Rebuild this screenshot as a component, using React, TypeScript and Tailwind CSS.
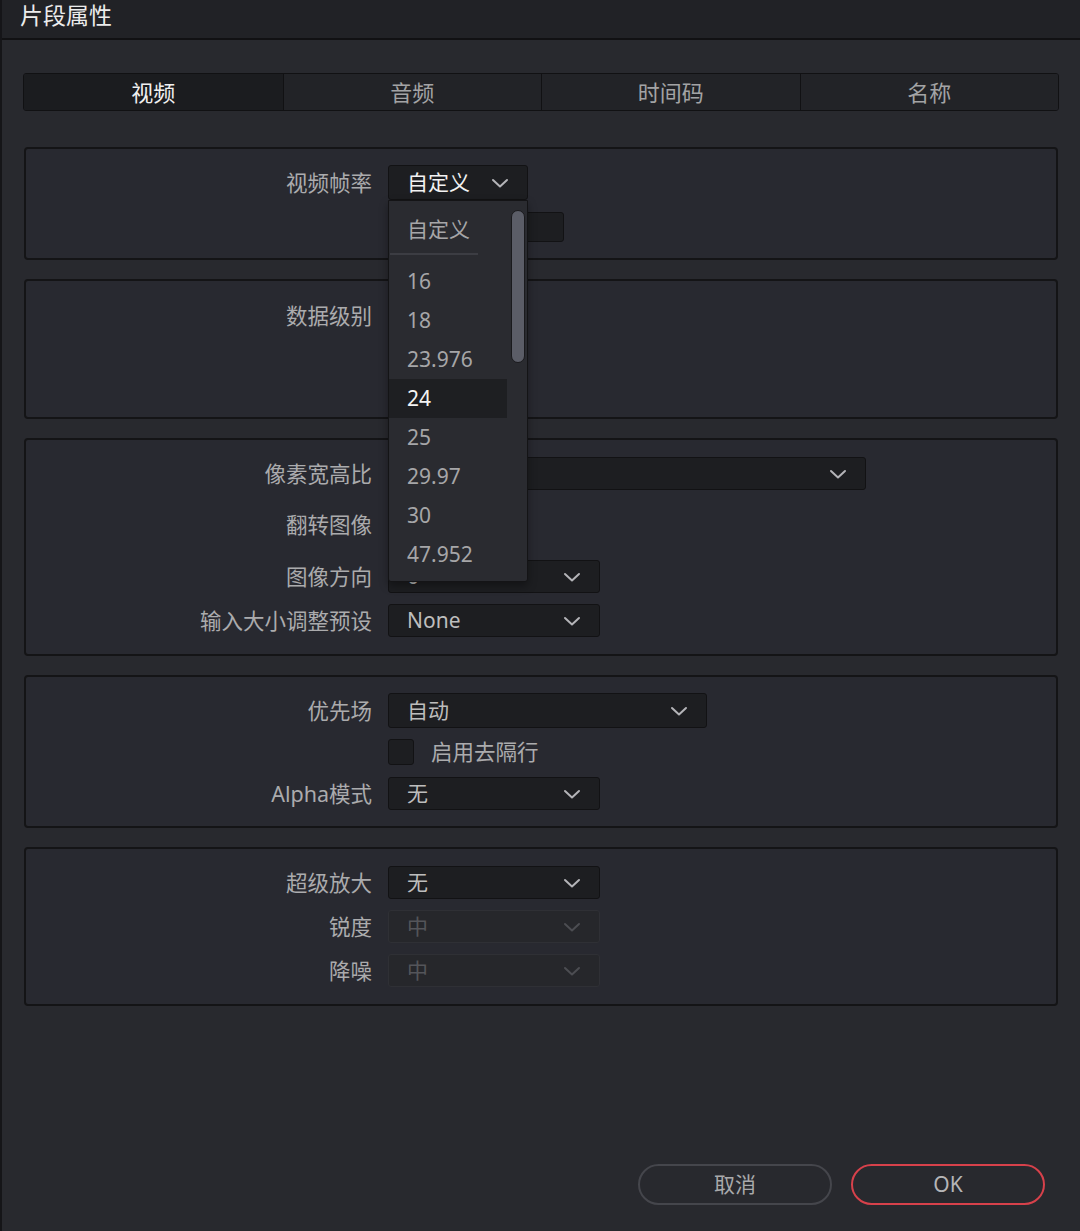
import { ReactNode } from "react";

const font = { fontFamily: '"Noto Sans", "Noto Sans CJK SC", sans-serif' };

const Chevron = ({ disabled = false }: { disabled?: boolean }) => (
  <svg width="18" height="10" viewBox="0 0 18 10" className="shrink-0">
    <path
      d="M2 2 L9 8.5 L16 2"
      fill="none"
      stroke={disabled ? "#4c4d52" : "#b4b4b8"}
      strokeWidth="2"
      strokeLinecap="round"
      strokeLinejoin="round"
    />
  </svg>
);

interface SelectProps {
  value?: string;
  width: string;
  height?: string;
  bright?: boolean;
  disabled?: boolean;
}

const Select = ({ value = "", width, height = "h-[34px]", bright, disabled }: SelectProps) => (
  <div
    className={`${width} ${height} flex items-center justify-between rounded-[3px] border pl-[18px] pr-[18px] text-[21px] ${
      disabled
        ? "border-[#2f3035] bg-[#26272b] text-[#54555a]"
        : `border-[#121214] bg-[#1d1e21] ${bright ? "text-[#f2f2f2]" : "text-[#bdbdbd]"}`
    }`}
  >
    <span className="leading-none">{value}</span>
    <Chevron disabled={disabled} />
  </div>
);

const Row = ({ label, children, className = "" }: { label?: string; children?: ReactNode; className?: string }) => (
  <div className={`flex items-center ${className}`}>
    <div className="w-[346px] shrink-0 text-right text-[21.5px] leading-none text-[#ababad]">{label}</div>
    <div className="ml-[16px] flex items-center">{children}</div>
  </div>
);

const Panel = ({ children, className = "" }: { children: ReactNode; className?: string }) => (
  <div className={`flex flex-col rounded-[4px] border-2 border-[#141416] bg-[#282930] ${className}`}>{children}</div>
);

const tabs = ["视频", "音频", "时间码", "名称"];
const rates = ["16", "18", "23.976", "24", "25", "29.97", "30", "47.952"];

export default function App() {
  return (
    <div
      style={font}
      className="relative flex h-[1231px] w-[1080px] flex-col overflow-hidden border-l-2 border-[#151518] bg-[#28292e]"
    >
      {/* Title bar */}
      <div className="flex h-[40px] shrink-0 items-center border-b-2 border-[#111113] bg-[#212226] pl-[18px] pb-[8px] text-[23px] text-[#ececec]">
        片段属性
      </div>

      <div className="flex flex-1 flex-col px-[21px] pt-[33px]">
        {/* Tabs */}
        <div className="grid h-[38px] grid-cols-4 overflow-hidden rounded-[3px] border border-[#111113]">
          {tabs.map((t, i) => (
            <div
              key={t}
              className={`flex items-center justify-center text-[22px] ${
                i > 0 ? "border-l border-[#111113]" : ""
              } ${i === 0 ? "bg-[#1b1c1f] text-[#f0f0f0]" : "bg-[#222327] text-[#a3a3a5]"}`}
            >
              {t}
            </div>
          ))}
        </div>

        <div className="mt-[36px] flex flex-col gap-[19px] pl-[1px] pr-[1px]">
          {/* Frame rate */}
          <Panel className="h-[113px] pt-[16px]">
            <Row label="视频帧率">
              <Select value="自定义" width="w-[140px]" height="h-[35px]" bright />
            </Row>
            <Row className="mt-[12px]">
              <div className="h-[30px] w-[176px] rounded-[3px] border border-[#121214] bg-[#1d1e21]" />
            </Row>
          </Panel>

          {/* Data levels */}
          <Panel className="h-[140px] pt-[24px]">
            <Row label="数据级别" className="h-[22px]" />
          </Panel>

          {/* Image */}
          <Panel className="h-[218px] pt-[17px]">
            <Row label="像素宽高比">
              <Select width="w-[478px]" height="h-[33px]" />
            </Row>
            <Row label="翻转图像" className="mt-[20px] h-[30px]" />
            <Row label="图像方向" className="mt-[20px]">
              <Select value="0°" width="w-[212px]" height="h-[33px]" />
            </Row>
            <Row label="输入大小调整预设" className="mt-[11px]">
              <Select value="None" width="w-[212px]" height="h-[33px]" />
            </Row>
          </Panel>

          {/* Field / alpha */}
          <Panel className="h-[153px] pt-[16px]">
            <Row label="优先场">
              <Select value="自动" width="w-[319px]" height="h-[35px]" />
            </Row>
            <Row className="mt-[11px]">
              <div className="h-[26px] w-[26px] rounded-[3px] border border-[#121214] bg-[#1d1e21]" />
              <span className="ml-[17px] text-[21.5px] leading-none text-[#ababad]">启用去隔行</span>
            </Row>
            <Row label="Alpha模式" className="mt-[12px]">
              <Select value="无" width="w-[212px]" height="h-[33px]" />
            </Row>
          </Panel>

          {/* Super scale */}
          <Panel className="h-[159px] pt-[17px]">
            <Row label="超级放大">
              <Select value="无" width="w-[212px]" height="h-[33px]" />
            </Row>
            <Row label="锐度" className="mt-[11px]">
              <Select value="中" width="w-[212px]" height="h-[33px]" disabled />
            </Row>
            <Row label="降噪" className="mt-[11px]">
              <Select value="中" width="w-[212px]" height="h-[33px]" disabled />
            </Row>
          </Panel>
        </div>

        {/* Buttons */}
        <div className="mt-auto mb-[26px] flex justify-end gap-[19px] pr-[14px]">
          <button className="h-[41px] w-[194px] rounded-full border-2 border-[#45464c] text-[21px] text-[#a9a9ab]">
            取消
          </button>
          <button className="h-[41px] w-[194px] rounded-full border-2 border-[#d7414b] text-[21px] text-[#b5b5b7]">
            OK
          </button>
        </div>
      </div>

      {/* Open frame-rate menu */}
      <div className="absolute left-[386px] top-[200px] h-[382px] w-[140px] rounded-b-[3px] border border-[#141416] bg-[#2a2b30] pt-[9px] shadow-[0_4px_8px_rgba(0,0,0,0.35)]">
        <div className="flex h-[40px] items-center pl-[18px] text-[21px] text-[#a6a6a8]">自定义</div>
        <div className="ml-[1px] mt-[3px] h-[2px] w-[88px] bg-[#3c3d43]" />
        <div className="mt-[7px] flex flex-col">
          {rates.map((r) => (
            <div
              key={r}
              className={`flex h-[39px] w-[118px] items-center pl-[18px] text-[21px] ${
                r === "24" ? "bg-[#1e1f22] text-[#f4f4f4]" : "text-[#a6a6a8]"
              }`}
            >
              {r}
            </div>
          ))}
        </div>
        <div className="absolute left-[122px] top-[9px] h-[153px] w-[14px] rounded-full border border-[#1a1a1d] bg-[#5b5d67]" />
      </div>
    </div>
  );
}
